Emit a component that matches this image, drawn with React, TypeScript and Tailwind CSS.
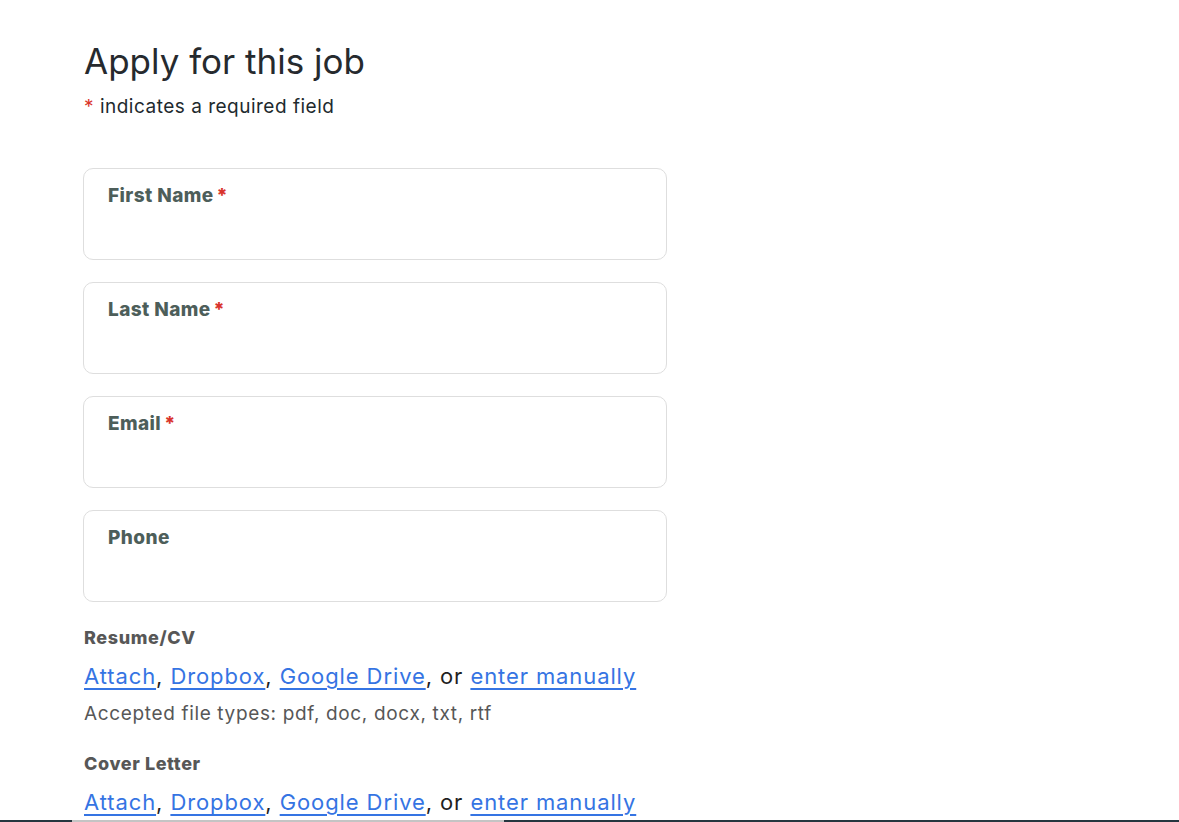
const fields = [
  { label: 'First Name', required: true },
  { label: 'Last Name', required: true },
  { label: 'Email', required: true },
  { label: 'Phone', required: false },
];

const attachments = [
  { label: 'Resume/CV', note: 'Accepted file types: pdf, doc, docx, txt, rtf' },
  { label: 'Cover Letter', note: 'Accepted file types: pdf, doc, docx, txt, rtf' },
];

const linkClass = 'text-[#3574e3] underline decoration-[1.5px] underline-offset-[4px]';

const AttachLinks = () => (
  <p className="mt-[11px] text-[22px] leading-[30px] tracking-[0.9px] text-[#1f1f1f]">
    <a href="#" className={linkClass}>Attach</a>,{' '}
    <a href="#" className={linkClass}>Dropbox</a>,{' '}
    <a href="#" className={linkClass}>Google Drive</a>, or{' '}
    <a href="#" className={linkClass}>enter manually</a>
  </p>
);

export default function App() {
  return (
    <div className="relative h-[822px] overflow-hidden bg-white font-['Inter',sans-serif]">
      <div className="pl-[84px] pt-[39px]">
        <h1 className="text-[35px] leading-[44px] font-normal text-[#262a2e]">Apply for this job</h1>
        <p className="mt-[11px] text-[19px] leading-[26px] tracking-[0.5px] text-[#1e2a2e]">
          <span className="text-[#d9342b]">*</span> indicates a required field
        </p>

        <div className="mt-[48px] -ml-px flex w-[584px] flex-col gap-[22px]">
          {fields.map((f) => (
            <div key={f.label} className="h-[92px] rounded-[10px] border border-[#dedede] px-[24px] pt-[14px]">
              <span className="text-[19px] leading-[26px] font-extrabold tracking-[0.4px] text-[#4d5e5a]">
                {f.label}
                {f.required && <span className="ml-[3px] text-[#d9342b]">*</span>}
              </span>
            </div>
          ))}
        </div>

        <div className="mt-[24px] flex flex-col">
          {attachments.map((a, i) => (
            <div key={a.label} className={i > 0 ? 'mt-[26px]' : ''}>
              <p className="text-[18px] leading-[24px] font-extrabold tracking-[0.6px] text-[#575757]">{a.label}</p>
              <AttachLinks />
              <p className="mt-[11px] text-[19px] leading-[24px] tracking-[0.65px] text-[#575757]">{a.note}</p>
            </div>
          ))}
        </div>
      </div>

      <div className="absolute bottom-0 left-0 flex h-[2px] w-full">
        <div className="w-[72px] bg-[#25363f]" />
        <div className="w-[432px] bg-[#c4c4c4]" />
        <div className="flex-1 bg-[#25363f]" />
      </div>
    </div>
  );
}
